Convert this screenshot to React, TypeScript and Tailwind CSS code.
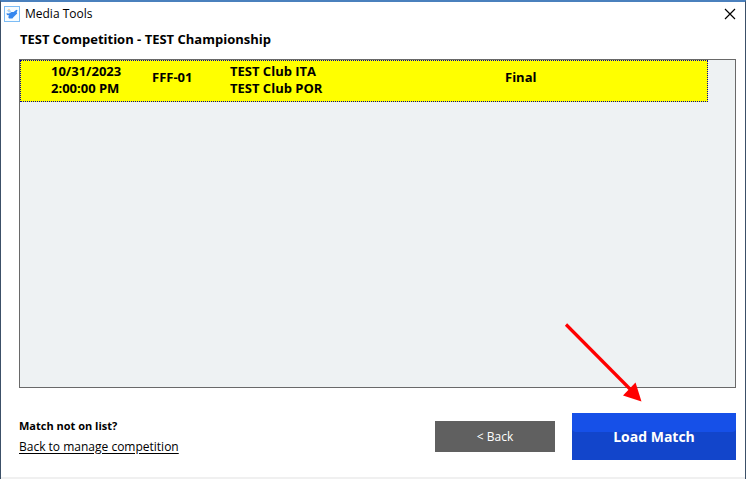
interface Match {
    date: string;
    time: string;
    code: string;
    home: string;
    away: string;
    phase: string;
}

const matches: Match[] = [
    {
        date: '10/31/2023',
        time: '2:00:00 PM',
        code: 'FFF-01',
        home: 'TEST Club ITA',
        away: 'TEST Club POR',
        phase: 'Final',
    },
];

const AppIcon = () => (
    <svg viewBox="0 0 16 16" className="size-4 shrink-0" aria-hidden="true">
        <rect x="0.5" y="0.5" width="15" height="15" fill="#f6fcff" stroke="#7dbcf5" />
        <path d="M2.4 7.2 5 7.6 7.4 6 9.6 6 12.4 3.8 13.6 4.4 12.6 6 13.2 7.4 11.6 9 9.6 11 8.4 12.6 5 12.4 4.2 11 5.2 9.6 3 9Z" fill="#3587ee" />
        <path d="M3 4.2 4.6 3.4 6.6 4.6 7.2 6.2 5.6 6.6 4 5.8Z" fill="#a9d4fb" />
        <circle cx="5" cy="3.6" r="0.8" fill="#f3cfa0" />
    </svg>
);

const CloseIcon = () => (
    <svg viewBox="0 0 16 16" className="size-4 shrink-0" aria-hidden="true">
        <path d="M3 3 13 13M13 3 3 13" stroke="#000000" strokeWidth="1.2" />
    </svg>
);

const TitleBar = () => (
    <header className="flex h-6 items-center justify-between pr-[7px] pl-[3px]">
        <div className="flex items-center gap-[5px]">
            <AppIcon />
            <h1 className="text-[12px] leading-4">Media Tools</h1>
        </div>
        <button type="button" aria-label="Close" className="flex size-4 items-center justify-center">
            <CloseIcon />
        </button>
    </header>
);

const MatchList = () => (
    <div className="flex-1 border border-[#696969] bg-[#eef2f3] pr-[27px]">
        <table className="w-full table-fixed border-collapse text-left text-[13px] leading-[17px] font-bold">
            <colgroup>
                <col className="w-[132px]" />
                <col className="w-[78px]" />
                <col className="w-[275px]" />
                <col />
            </colgroup>
            <tbody>
                {matches.map((match) => (
                    <tr key={match.code} className="h-[42px] bg-[#ffff00] outline-1 -outline-offset-1 outline-dotted outline-[#0000a0]">
                        <td className="pb-0.5 pl-[31px]">
                            {match.date}
                            <br />
                            {match.time}
                        </td>
                        <td className="pb-2">{match.code}</td>
                        <td className="pb-0.5">
                            {match.home}
                            <br />
                            {match.away}
                        </td>
                        <td className="pb-2">{match.phase}</td>
                    </tr>
                ))}
            </tbody>
        </table>
    </div>
);

// Points at the button it is placed in
const Arrow = () => (
    <svg viewBox="0 0 80 80" className="pointer-events-none absolute -top-[91px] -left-2 size-20" aria-hidden="true">
        <path d="M2 2.5 66 67" stroke="#ff0000" strokeWidth="3.2" />
        <path d="M77.5 79.5 59 73.5 71.5 60.5Z" fill="#ff0000" />
    </svg>
);

const Footer = () => (
    <footer className="mt-[25px] mb-[17px] flex items-center justify-between">
        <div className="pb-0.5">
            <p className="text-[11px] leading-[21px] font-bold">Match not on list?</p>
            <a href="#manage" className="block text-[12px] leading-[21px] underline underline-offset-2">
                Back to manage competition
            </a>
        </div>
        <div className="flex items-center gap-[17px]">
            <button type="button" className="h-[31px] w-[120px] bg-[#606060] text-[12px] text-white">
                &lt; Back
            </button>
            <div className="relative">
                <button type="button" className="relative h-[47px] w-[164px] bg-[#1245cb] text-[14px] font-bold text-white">
                    <span className="absolute inset-x-0 top-0 h-[19px] rounded-b-sm bg-[#1650e8]" />
                    <span className="relative">Load Match</span>
                </button>
                <Arrow />
            </div>
        </div>
    </footer>
);

const App = () => {
    return (
        <div className="flex min-h-screen flex-col border-x border-t-2 border-x-[#3c5068] border-t-[#4a80bd] bg-white font-['Open_Sans','Noto_Sans',sans-serif] text-black">
            <TitleBar />
            <main className="flex flex-1 flex-col pr-[9px] pl-[18px]">
                <h2 className="mb-[6px] pt-[3px] pb-1 pl-px text-[13px] leading-5 font-bold">
                    TEST Competition - TEST Championship
                </h2>
                <MatchList />
                <Footer />
            </main>
            <div className="h-0.5 bg-[#f0f0f0]" />
        </div>
    );
};

export default App;
